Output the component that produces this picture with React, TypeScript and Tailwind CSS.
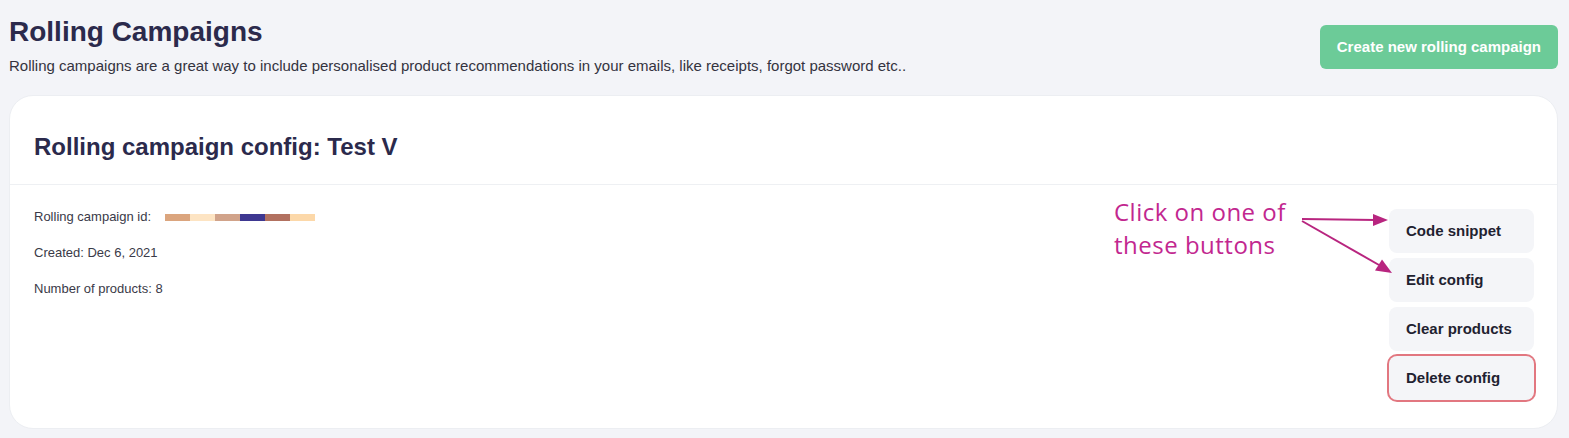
import React from "react";

const idSegments = ["bg-[#dba57e]", "bg-[#fde4c3]", "bg-[#d1a38a]", "bg-[#3e3891]", "bg-[#b27160]", "bg-[#fcd8a9]"];

const actions = ["Code snippet", "Edit config", "Clear products"];

function ActionButton({ label, danger }: { label: string; danger?: boolean }) {
  return (
    <button
      className={
        "h-11 w-[145px] rounded-lg bg-[#f4f5f8] pl-[17px] text-left text-[15px] font-bold text-[#1f2230] " +
        (danger ? "ring-2 ring-[#e27780]" : "")
      }
    >
      {label}
    </button>
  );
}

function Annotation() {
  return (
    <div className="pointer-events-none absolute left-[1104px] top-[10px] w-[300px] h-[94px]">
      <p className="font-['Open_Sans',sans-serif] text-[24px] font-medium leading-[33px] tracking-[0.5px] text-[#c2278f]">
        Click on one of
        <br />
        these buttons
      </p>
      <svg className="absolute left-0 top-0" width="300" height="94" viewBox="0 0 300 94">
        <line x1="188" y1="24" x2="262" y2="25" stroke="#b8257f" strokeWidth="2" />
        <polygon points="259,19 274,25 259,31" fill="#b8257f" />
        <line x1="188" y1="26" x2="265" y2="70" stroke="#b8257f" strokeWidth="2" />
        <polygon points="261,75.5 278,78 268,64.5" fill="#b8257f" />
      </svg>
    </div>
  );
}

export default function App() {
  return (
    <div className="min-h-screen bg-[#f3f4f8] pl-[9px] pr-[11px] font-['Liberation_Sans',Arial,sans-serif]">
      <div className="flex items-start justify-between">
        <div className="pt-4">
          <h1 className="text-[28px] leading-8 font-bold text-[#2b2a4c]">Rolling Campaigns</h1>
          <p className="mt-2 text-[15px] leading-5 text-[#333340]">
            Rolling campaigns are a great way to include personalised product recommendations in your emails, like receipts, forgot password etc..
          </p>
        </div>
        <button className="mt-[25px] h-11 rounded-md bg-[#6ccb98] px-[17px] text-[15px] font-bold text-white">
          Create new rolling campaign
        </button>
      </div>

      <div className="mt-[19px] rounded-3xl border border-[#eceef2] bg-white">
        <div className="border-b border-[#eef0f3] px-6 pt-[35px] pb-[21px]">
          <h2 className="text-[24px] leading-8 font-bold text-[#2b2a4c]">Rolling campaign config: Test V</h2>
        </div>
        <div className="relative flex justify-between pl-6 pr-[23px] pt-6 pb-7">
          <div className="flex flex-col gap-5 text-[13px] leading-4 text-[#3a3a48]">
            <div className="flex items-center gap-[14px]">
              <span>Rolling campaign id:</span>
              <span className="flex h-[7px]">
                {idSegments.map((c, i) => (
                  <span key={i} className={"h-full w-[25px] " + c} />
                ))}
              </span>
            </div>
            <span>Created: Dec 6, 2021</span>
            <span>Number of products: 8</span>
          </div>
          <div className="flex flex-col gap-[5px]">
            {actions.map((a) => (
              <ActionButton key={a} label={a} />
            ))}
            <ActionButton label="Delete config" danger />
          </div>
          <Annotation />
        </div>
      </div>
    </div>
  );
}
